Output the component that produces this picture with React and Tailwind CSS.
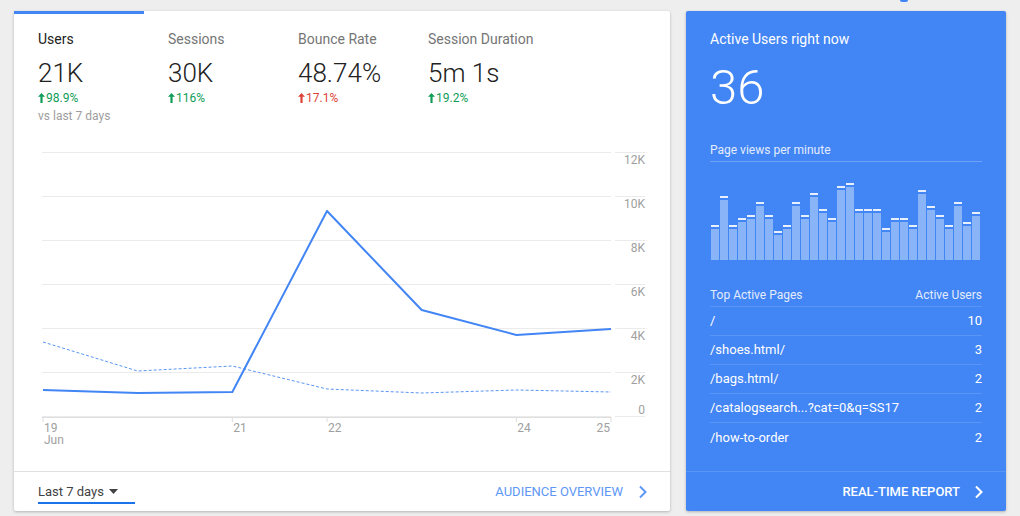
import React from 'react'

const metrics = [
  { label: 'Users', value: '21K', delta: '98.9%', up: true, good: true, active: true },
  { label: 'Sessions', value: '30K', delta: '116%', good: true },
  { label: 'Bounce Rate', value: '48.74%', delta: '17.1%', good: false },
  { label: 'Session Duration', value: '5m 1s', delta: '19.2%', good: true },
]

const bars = [35, 64, 35, 42, 45, 58, 45, 29, 35, 58, 45, 67, 51, 42, 74, 77, 51, 51, 51, 32, 42, 42, 35, 70, 54, 45, 35, 58, 38, 48]

const pages = [
  ['/', '10'],
  ['/shoes.html/', '3'],
  ['/bags.html/', '2'],
  ['/catalogsearch...?cat=0&q=SS17', '2'],
  ['/how-to-order', '2'],
]

function Arrow({ color }) {
  return (
    <svg width="7" height="10" viewBox="0 0 7 10" className="mr-[1px]">
      <path d="M3.5 0 L7 3.8 H4.6 V10 H2.4 V3.8 H0 Z" fill={color} />
    </svg>
  )
}

// x positions of days 19..25 (card-relative: page x - 14)
const dayX = (d) => 29 + (d - 19) * 94.67
const solid = [390, 393, 392, 211, 310, 335, 329]
const dashed = [342, 371, 366, 389, 393, 390, 392]

function Chart() {
  const top = 140
  const grid = [152, 196, 240, 284, 328, 372, 416]
  const labels = ['12K', '10K', '8K', '6K', '4K', '2K', '0']
  const pts = (arr) => arr.map((y, i) => `${dayX(19 + i)},${y - top}`).join(' ')
  return (
    <svg width="656" height="310" className="block">
      {grid.map((y, i) => (
        <g key={y}>
          <line x1="28" x2="597" y1={y - top + 0.5} y2={y - top + 0.5} stroke="#ebebeb" strokeWidth="1" />
          <line x1="601" x2="631" y1={y - top + 0.5} y2={y - top + 0.5} stroke="#ebebeb" strokeWidth="1" />
          <text
            x="631"
            y={i === 6 ? y - top - 2 : y - top + 12}
            textAnchor="end"
            fontSize="12"
            fill="#a0a0a0"
            fontFamily="Roboto, sans-serif"
          >
            {labels[i]}
          </text>
        </g>
      ))}
      <line x1="28" x2="597" y1={277.5} y2={277.5} stroke="#dedede" strokeWidth="1" />
      {[19, 21, 22, 24, 25].map((d) => (
        <g key={d}>
          <line x1={dayX(d)} x2={dayX(d)} y1="277" y2="282" stroke="#dedede" strokeWidth="1" />
          <text
            x={d === 25 ? dayX(d) - 1 : dayX(d) + 1}
            y="292"
            textAnchor={d === 25 ? 'end' : 'start'}
            fontSize="12"
            fill="#a0a0a0"
            fontFamily="Roboto, sans-serif"
          >
            {d}
          </text>
        </g>
      ))}
      <text x={dayX(19) + 1} y="304" fontSize="12" fill="#a0a0a0" fontFamily="Roboto, sans-serif">
        Jun
      </text>
      <polyline points={pts(dashed)} fill="none" stroke="#5a95f5" strokeWidth="1" strokeDasharray="3 2" />
      <polyline points={pts(solid)} fill="none" stroke="#4285f4" strokeWidth="2" strokeLinejoin="round" />
    </svg>
  )
}

function Chevron({ color }) {
  return (
    <svg width="10" height="14" viewBox="0 0 10 14">
      <path d="M2 1.5 L7.5 7 L2 12.5" fill="none" stroke={color} strokeWidth="2" />
    </svg>
  )
}

export default function App() {
  return (
    <div className="w-[1020px] h-[516px] bg-[#eeeeee] overflow-hidden font-['Roboto',sans-serif]">
      {/* top strip */}
      <div className="h-[11px] flex">
        <div className="ml-[900px] w-[8px] h-[2px] rounded-b-full bg-[#4285f4]" />
      </div>

      <div className="flex gap-[16px] pl-[14px]">
        {/* Left card */}
        <div className="w-[656px] h-[500px] bg-white rounded-[2px] shadow-[0_1px_3px_rgba(0,0,0,0.25)] flex flex-col">
          <div className="w-[130px] h-[3px] bg-[#4285f4]" />
          <div className="flex items-start pl-[24px] pt-[15px]">
            {metrics.map((m) => (
              <div key={m.label} className="w-[130px] shrink-0">
                <div className={`text-[14px] leading-[20px] ${m.active ? 'text-[#212121]' : 'text-[#757575]'}`}>
                  {m.label}
                </div>
                <div className="mt-[8px] text-[26px] leading-[32px] font-light text-[#212121]">{m.value}</div>
                <div
                  className={`mt-[1px] flex items-center text-[12px] leading-[16px] ${
                    m.good ? 'text-[#0f9d58]' : 'text-[#db4437]'
                  }`}
                >
                  <Arrow color={m.good ? '#0f9d58' : '#db4437'} />
                  {m.delta}
                </div>
                {m.active && (
                  <div className="mt-[2px] text-[12px] leading-[16px] text-[#9e9e9e]">vs last 7 days</div>
                )}
              </div>
            ))}
          </div>
          <div className="mt-[16px]">
            <Chart />
          </div>
          <div className="flex-1" />
          <div className="h-[40px] border-t border-[#e0e0e0] flex items-center justify-between pl-[24px] pr-[22px]">
            <div className="relative h-[40px] w-[97px] flex items-center">
              <span className="text-[13px] text-[#424242]">Last 7 days</span>
              <svg width="9" height="5" viewBox="0 0 9 5" className="ml-[5px]">
                <path d="M0 0 H9 L4.5 5 Z" fill="#424242" />
              </svg>
              <div className="absolute left-0 right-0 bottom-[8px] h-[2px] bg-[#1a73e8]" />
            </div>
            <div className="flex items-center gap-[15px]">
              <span className="text-[13px] text-[#5e97f6]">AUDIENCE OVERVIEW</span>
              <Chevron color="#5e97f6" />
            </div>
          </div>
        </div>

        {/* Right card */}
        <div className="w-[320px] h-[500px] bg-[#4285f4] rounded-[2px] shadow-[0_1px_3px_rgba(0,0,0,0.25)] flex flex-col text-white">
          <div className="px-[24px] pt-[18px]">
            <div className="text-[14px] leading-[20px]">Active Users right now</div>
            <div className="mt-[10px] text-[49px] leading-[58px] font-light">36</div>
            <div className="mt-[24px] pb-[2px] text-[12px] leading-[18px] text-[#e3ecfd] border-b border-[#6fa2f7]">
              Page views per minute
            </div>
            <div className="mt-[20px] h-[78px] flex items-end gap-[1px] pl-[1px]">
              {bars.map((h, i) => (
                <div key={i} className="w-[8px] flex flex-col" style={{ height: h }}>
                  <div className="h-[2px] bg-[#e8f0fe]" />
                  <div className="mt-[2px] flex-1 bg-[#8ab4f8]" />
                </div>
              ))}
            </div>
            <div className="mt-[26px] flex justify-between text-[12px] leading-[18px] text-[#e3ecfd] pb-[2px] border-b border-[#5a95f5]">
              <span>Top Active Pages</span>
              <span>Active Users</span>
            </div>
            {pages.map(([p, n], i) => (
              <div
                key={p}
                className={`h-[29px] flex items-center justify-between text-[13px] ${
                  i < pages.length - 1 ? 'border-b border-[#5a95f5]' : ''
                }`}
              >
                <span>{p}</span>
                <span>{n}</span>
              </div>
            ))}
          </div>
          <div className="flex-1" />
          <div className="h-[40px] border-t border-[#5a95f5] flex items-center justify-end gap-[14px] pr-[22px]">
            <span className="text-[13px] font-medium">REAL-TIME REPORT</span>
            <Chevron color="#ffffff" />
          </div>
        </div>
      </div>
    </div>
  )
}
